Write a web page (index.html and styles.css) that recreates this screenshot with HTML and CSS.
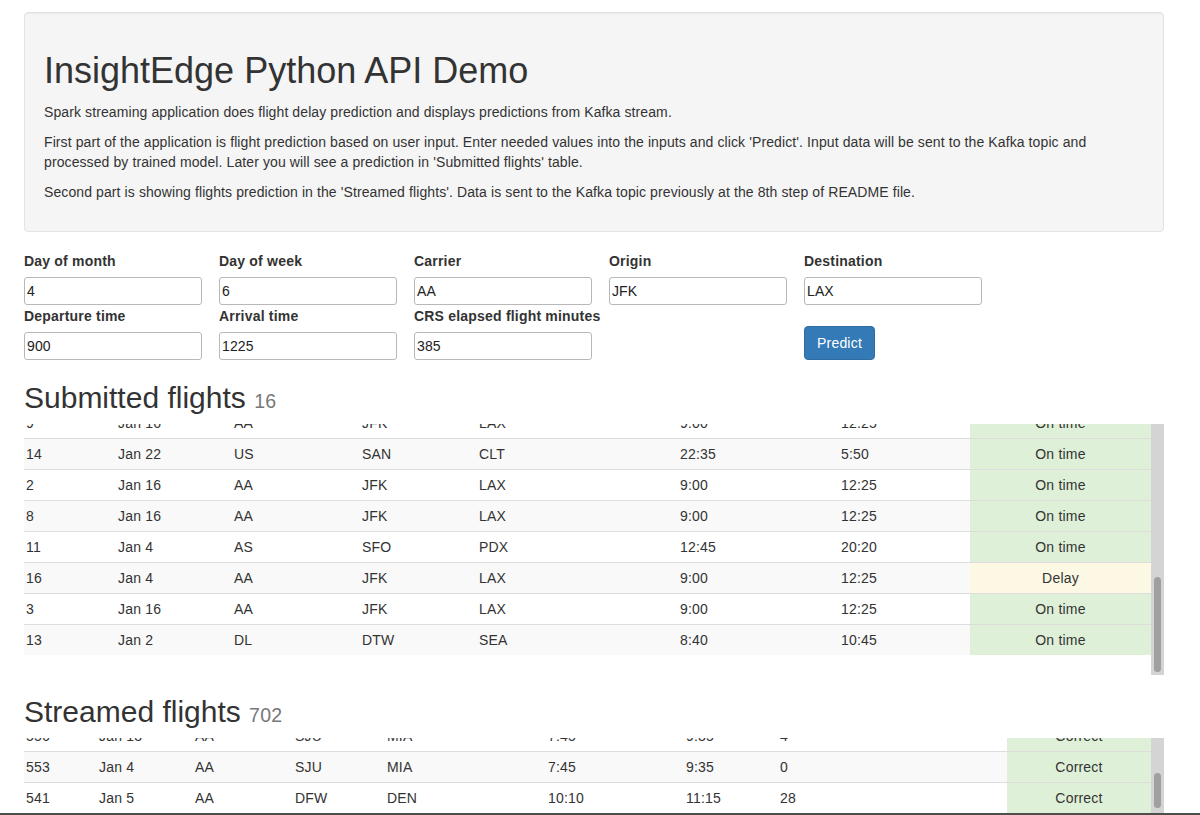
FILE: index.html
```html
<!DOCTYPE html>
<html lang="en">
<head>
<meta charset="utf-8">
<title>InsightEdge Python API Demo</title>
<link rel="stylesheet" href="styles.css">
</head>
<body>
<div class="viewport">
<div class="page">
  <div class="well">
    <h1 class="title">InsightEdge Python API Demo</h1>
    <p class="lead-text">Spark streaming application does flight delay prediction and displays predictions from Kafka stream.</p>
    <p class="lead-text">First part of the application is flight prediction based on user input. Enter needed values into the inputs and click 'Predict'. Input data will be sent to the Kafka topic and processed by trained model. Later you will see a prediction in 'Submitted flights' table.</p>
    <p class="lead-text">Second part is showing flights prediction in the 'Streamed flights'. Data is sent to the Kafka topic previously at the 8th step of README file.</p>
  </div>

  <form class="form-grid">
    <div class="field"><label class="field-label">Day of month</label><input class="field-input" type="text" value="4"></div>
    <div class="field"><label class="field-label">Day of week</label><input class="field-input" type="text" value="6"></div>
    <div class="field"><label class="field-label">Carrier</label><input class="field-input" type="text" value="AA"></div>
    <div class="field"><label class="field-label">Origin</label><input class="field-input" type="text" value="JFK"></div>
    <div class="field"><label class="field-label">Destination</label><input class="field-input" type="text" value="LAX"></div>
    <div class="field"><label class="field-label">Departure time</label><input class="field-input" type="text" value="900"></div>
    <div class="field"><label class="field-label">Arrival time</label><input class="field-input" type="text" value="1225"></div>
    <div class="field"><label class="field-label">CRS elapsed flight minutes</label><input class="field-input" type="text" value="385"></div>
    <div class="field"></div>
    <div class="field field-action"><button class="btn-primary" type="button">Predict</button></div>
  </form>

  <h2 class="section-title">Submitted flights <small class="count">16</small></h2>
  <div class="scroll-frame">
    <div class="scroll-view" id="submitted">
      <table class="flights">
        <colgroup>
          <col class="s1"><col class="s2"><col class="s3"><col class="s4"><col class="s5"><col class="s6"><col class="s7"><col class="s8">
        </colgroup>
        <thead>
          <tr><th>#</th><th>Date</th><th>Carrier</th><th>Origin</th><th>Destination</th><th>Departure</th><th>Arrival</th><th class="center">Prediction</th></tr>
        </thead>
        <tbody>
          <tr><td>1</td><td>Jan 16</td><td>AA</td><td>JFK</td><td>LAX</td><td>9:00</td><td>12:25</td><td class="ok">On time</td></tr>
          <tr class="alt"><td>4</td><td>Jan 16</td><td>AA</td><td>JFK</td><td>LAX</td><td>9:00</td><td>12:25</td><td class="ok">On time</td></tr>
          <tr><td>5</td><td>Jan 16</td><td>AA</td><td>JFK</td><td>LAX</td><td>9:00</td><td>12:25</td><td class="ok">On time</td></tr>
          <tr class="alt"><td>6</td><td>Jan 10</td><td>UA</td><td>ORD</td><td>SFO</td><td>7:15</td><td>10:05</td><td class="warn">Delay</td></tr>
          <tr><td>7</td><td>Jan 16</td><td>AA</td><td>JFK</td><td>LAX</td><td>9:00</td><td>12:25</td><td class="ok">On time</td></tr>
          <tr class="alt"><td>10</td><td>Jan 16</td><td>AA</td><td>JFK</td><td>LAX</td><td>9:00</td><td>12:25</td><td class="ok">On time</td></tr>
          <tr><td>12</td><td>Jan 4</td><td>AS</td><td>SFO</td><td>PDX</td><td>12:45</td><td>20:20</td><td class="ok">On time</td></tr>
          <tr class="alt"><td>15</td><td>Jan 16</td><td>AA</td><td>JFK</td><td>LAX</td><td>9:00</td><td>12:25</td><td class="ok">On time</td></tr>
          <tr><td>9</td><td>Jan 16</td><td>AA</td><td>JFK</td><td>LAX</td><td>9:00</td><td>12:25</td><td class="ok">On time</td></tr>
          <tr class="alt"><td>14</td><td>Jan 22</td><td>US</td><td>SAN</td><td>CLT</td><td>22:35</td><td>5:50</td><td class="ok">On time</td></tr>
          <tr><td>2</td><td>Jan 16</td><td>AA</td><td>JFK</td><td>LAX</td><td>9:00</td><td>12:25</td><td class="ok">On time</td></tr>
          <tr class="alt"><td>8</td><td>Jan 16</td><td>AA</td><td>JFK</td><td>LAX</td><td>9:00</td><td>12:25</td><td class="ok">On time</td></tr>
          <tr><td>11</td><td>Jan 4</td><td>AS</td><td>SFO</td><td>PDX</td><td>12:45</td><td>20:20</td><td class="ok">On time</td></tr>
          <tr class="alt"><td>16</td><td>Jan 4</td><td>AA</td><td>JFK</td><td>LAX</td><td>9:00</td><td>12:25</td><td class="warn">Delay</td></tr>
          <tr><td>3</td><td>Jan 16</td><td>AA</td><td>JFK</td><td>LAX</td><td>9:00</td><td>12:25</td><td class="ok">On time</td></tr>
          <tr class="alt"><td>13</td><td>Jan 2</td><td>DL</td><td>DTW</td><td>SEA</td><td>8:40</td><td>10:45</td><td class="ok">On time</td></tr>
        </tbody>
      </table>
    </div>
    <div class="scroll-track"><div class="thumb thumb-submitted"></div></div>
  </div>

  <h2 class="section-title">Streamed flights <small class="count">702</small></h2>
  <div class="scroll-frame">
    <div class="scroll-view" id="streamed">
      <table class="flights">
        <colgroup>
          <col class="t1"><col class="t2"><col class="t3"><col class="t4"><col class="t5"><col class="t6"><col class="t7"><col class="t8"><col class="t9">
        </colgroup>
        <thead>
          <tr><th>#</th><th>Date</th><th>Carrier</th><th>Origin</th><th>Destination</th><th>Departure</th><th>Arrival</th><th>Delay</th><th class="center">Prediction</th></tr>
        </thead>
        <tbody id="streamed-body">
          <tr class="alt"><td>702</td><td>Jan 9</td><td>AA</td><td>MIA</td><td>ORD</td><td>6:30</td><td>8:55</td><td>12</td><td class="ok">Correct</td></tr>
          <tr><td>688</td><td>Jan 3</td><td>DL</td><td>ATL</td><td>LGA</td><td>14:10</td><td>16:25</td><td>0</td><td class="ok">Correct</td></tr>
          <tr class="alt"><td>671</td><td>Jan 12</td><td>AA</td><td>DFW</td><td>LAX</td><td>11:05</td><td>12:20</td><td>45</td><td class="warn">Incorrect</td></tr>
          <tr><td>650</td><td>Jan 7</td><td>UA</td><td>SFO</td><td>EWR</td><td>8:00</td><td>16:30</td><td>3</td><td class="ok">Correct</td></tr>
          <tr class="alt"><td>622</td><td>Jan 14</td><td>AA</td><td>SJU</td><td>MIA</td><td>7:45</td><td>9:35</td><td>0</td><td class="ok">Correct</td></tr>
          <tr><td>603</td><td>Jan 2</td><td>WN</td><td>LAS</td><td>PHX</td><td>13:20</td><td>14:30</td><td>7</td><td class="ok">Correct</td></tr>
          <tr class="alt"><td>581</td><td>Jan 11</td><td>AA</td><td>JFK</td><td>LAX</td><td>9:00</td><td>12:25</td><td>2</td><td class="ok">Correct</td></tr>
          <tr><td>556</td><td>Jan 13</td><td>AA</td><td>SJU</td><td>MIA</td><td>7:45</td><td>9:35</td><td>4</td><td class="ok">Correct</td></tr>
          <tr class="alt" id="anchor-row"><td>553</td><td>Jan 4</td><td>AA</td><td>SJU</td><td>MIA</td><td>7:45</td><td>9:35</td><td>0</td><td class="ok">Correct</td></tr>
          <tr><td>541</td><td>Jan 5</td><td>AA</td><td>DFW</td><td>DEN</td><td>10:10</td><td>11:15</td><td>28</td><td class="ok">Correct</td></tr>
        </tbody>
      </table>
    </div>
    <div class="scroll-track"><div class="thumb thumb-streamed"></div></div>
  </div>
</div>
</div>
<div class="frame-edge"></div>
<script src="script.js"></script>
</body>
</html>
```

FILE: styles.css
```css
html, body {
  margin: 0;
  padding: 0;
  background: #fff;
}

body {
  font-family: "Liberation Sans", Arial, sans-serif;
  font-size: 14px;
  line-height: 20px;
  letter-spacing: 0.2px;
  color: #333;
  height: 815px;
  overflow: hidden;
}

.viewport {
  height: 813px;
  overflow: hidden;
}

.page {
  width: 1140px;
  padding: 12px 0 0 24px;
}

.well {
  background: #f5f5f5;
  border: 1px solid #e3e3e3;
  border-radius: 4px;
  box-shadow: inset 0 1px 1px rgba(0, 0, 0, 0.05);
  padding: 19px;
  margin-bottom: 19px;
}

.title {
  font-size: 36px;
  font-weight: 400;
  line-height: 1.1;
  letter-spacing: 0;
  margin: 19px 0 11px 0;
  color: #333;
}

.lead-text {
  font-size: 14px;
  line-height: 20px;
  letter-spacing: 0.1px;
  margin: 0 0 10px 0;
}

.form-grid {
  display: grid;
  grid-template-columns: repeat(5, 195px);
  margin: 0 0 2px 0;
}

.field {
  display: flex;
  flex-direction: column;
  align-items: flex-start;
}

.field-label {
  font-weight: 700;
  font-size: 14px;
  line-height: 20px;
  margin-bottom: 5px;
}

.field-input {
  box-sizing: border-box;
  width: 178px;
  height: 28px;
  margin: 1px 0 1px 0;
  padding: 1px 2px;
  border: 1px solid #b8b8b8;
  border-radius: 3px;
  font-family: "Liberation Sans", Arial, sans-serif;
  font-size: 14px;
  letter-spacing: 0.1px;
  color: #222;
  background: #fff;
}

.field-action {
  padding-top: 20px;
}

.btn-primary {
  box-sizing: border-box;
  height: 34px;
  padding: 6px 12px;
  font-family: "Liberation Sans", Arial, sans-serif;
  font-size: 14px;
  line-height: 20px;
  letter-spacing: 0.2px;
  color: #fff;
  background: #337ab7;
  border: 1px solid #2e6da4;
  border-radius: 4px;
}

.section-title {
  font-size: 30px;
  font-weight: 400;
  line-height: 1.1;
  letter-spacing: 0;
  margin: 20px 0 10px 0;
  color: #333;
}

.count {
  font-size: 65%;
  color: #777;
  font-weight: 400;
  letter-spacing: 0.2px;
}

.scroll-frame {
  display: flex;
  height: 251px;
}

.scroll-view {
  flex: 1;
  min-width: 0;
  overflow: hidden;
}

.scroll-track {
  width: 13px;
  flex: none;
  background: #d4d4d4;
  display: flex;
  flex-direction: column;
  align-items: center;
}

.thumb {
  width: 7px;
  border-radius: 4px;
  background: #a0a0a0;
}

.thumb-submitted {
  margin-top: 153px;
  height: 95px;
}

.thumb-streamed {
  margin-top: 35px;
  height: 35px;
}

.flights {
  width: 100%;
  border-collapse: collapse;
  table-layout: fixed;
  margin-bottom: 20px;
}

.flights th {
  text-align: left;
  font-weight: 700;
  padding: 5px 2px;
  line-height: 20px;
  border-bottom: 2px solid #ddd;
}

.flights td {
  padding: 5px 2px;
  line-height: 20px;
  border-top: 1px solid #ddd;
  white-space: nowrap;
}

.flights .alt td {
  background: #f9f9f9;
}

.flights td.ok,
.flights .alt td.ok {
  background: #dff0d8;
  text-align: center;
}

.flights td.warn,
.flights .alt td.warn {
  background: #fcf8e3;
  text-align: center;
}

.center {
  text-align: center !important;
}

.s1 { width: 92px; }
.s2 { width: 116px; }
.s3 { width: 128px; }
.s4 { width: 117px; }
.s5 { width: 201px; }
.s6 { width: 161px; }
.s7 { width: 131px; }
.s8 { width: 181px; }

.t1 { width: 73px; }
.t2 { width: 96px; }
.t3 { width: 100px; }
.t4 { width: 92px; }
.t5 { width: 161px; }
.t6 { width: 138px; }
.t7 { width: 94px; }
.t8 { width: 229px; }
.t9 { width: 144px; }

.frame-edge {
  height: 2px;
  background: #4e4e4e;
}
```

FILE: script.js
```js
(function () {
  var carriers = ['AA', 'DL', 'UA', 'AS', 'WN', 'US'];
  var routes = [['SJU', 'MIA'], ['DFW', 'DEN'], ['JFK', 'LAX'], ['ATL', 'ORD'], ['SFO', 'SEA'], ['LAS', 'PHX']];
  var body = document.getElementById('streamed-body');
  var id = 530;
  function pad(n) { return (n < 10 ? '0' : '') + n; }
  for (var i = 0; i < 46; i++) {
    var tr = document.createElement('tr');
    if (i % 2 === 1) tr.className = 'alt';
    var r = routes[i % routes.length];
    var cells = [String(id - i * 3), 'Jan ' + ((i % 27) + 1), carriers[i % carriers.length], r[0], r[1],
      ((i % 14) + 6) + ':' + pad((i * 5) % 60),
      ((i % 14) + 8) + ':' + pad((i * 7) % 60),
      String((i * 11) % 40), 'Correct'];
    for (var c = 0; c < cells.length; c++) {
      var td = document.createElement('td');
      td.textContent = cells[c];
      if (c === cells.length - 1) td.className = 'ok';
      tr.appendChild(td);
    }
    body.appendChild(tr);
  }

  var submitted = document.getElementById('submitted');
  submitted.scrollTop = submitted.scrollHeight;

  var streamed = document.getElementById('streamed');
  var anchor = document.getElementById('anchor-row');
  var offset = anchor.getBoundingClientRect().top - streamed.getBoundingClientRect().top + streamed.scrollTop;
  streamed.scrollTop = offset - 14;
})();
```
